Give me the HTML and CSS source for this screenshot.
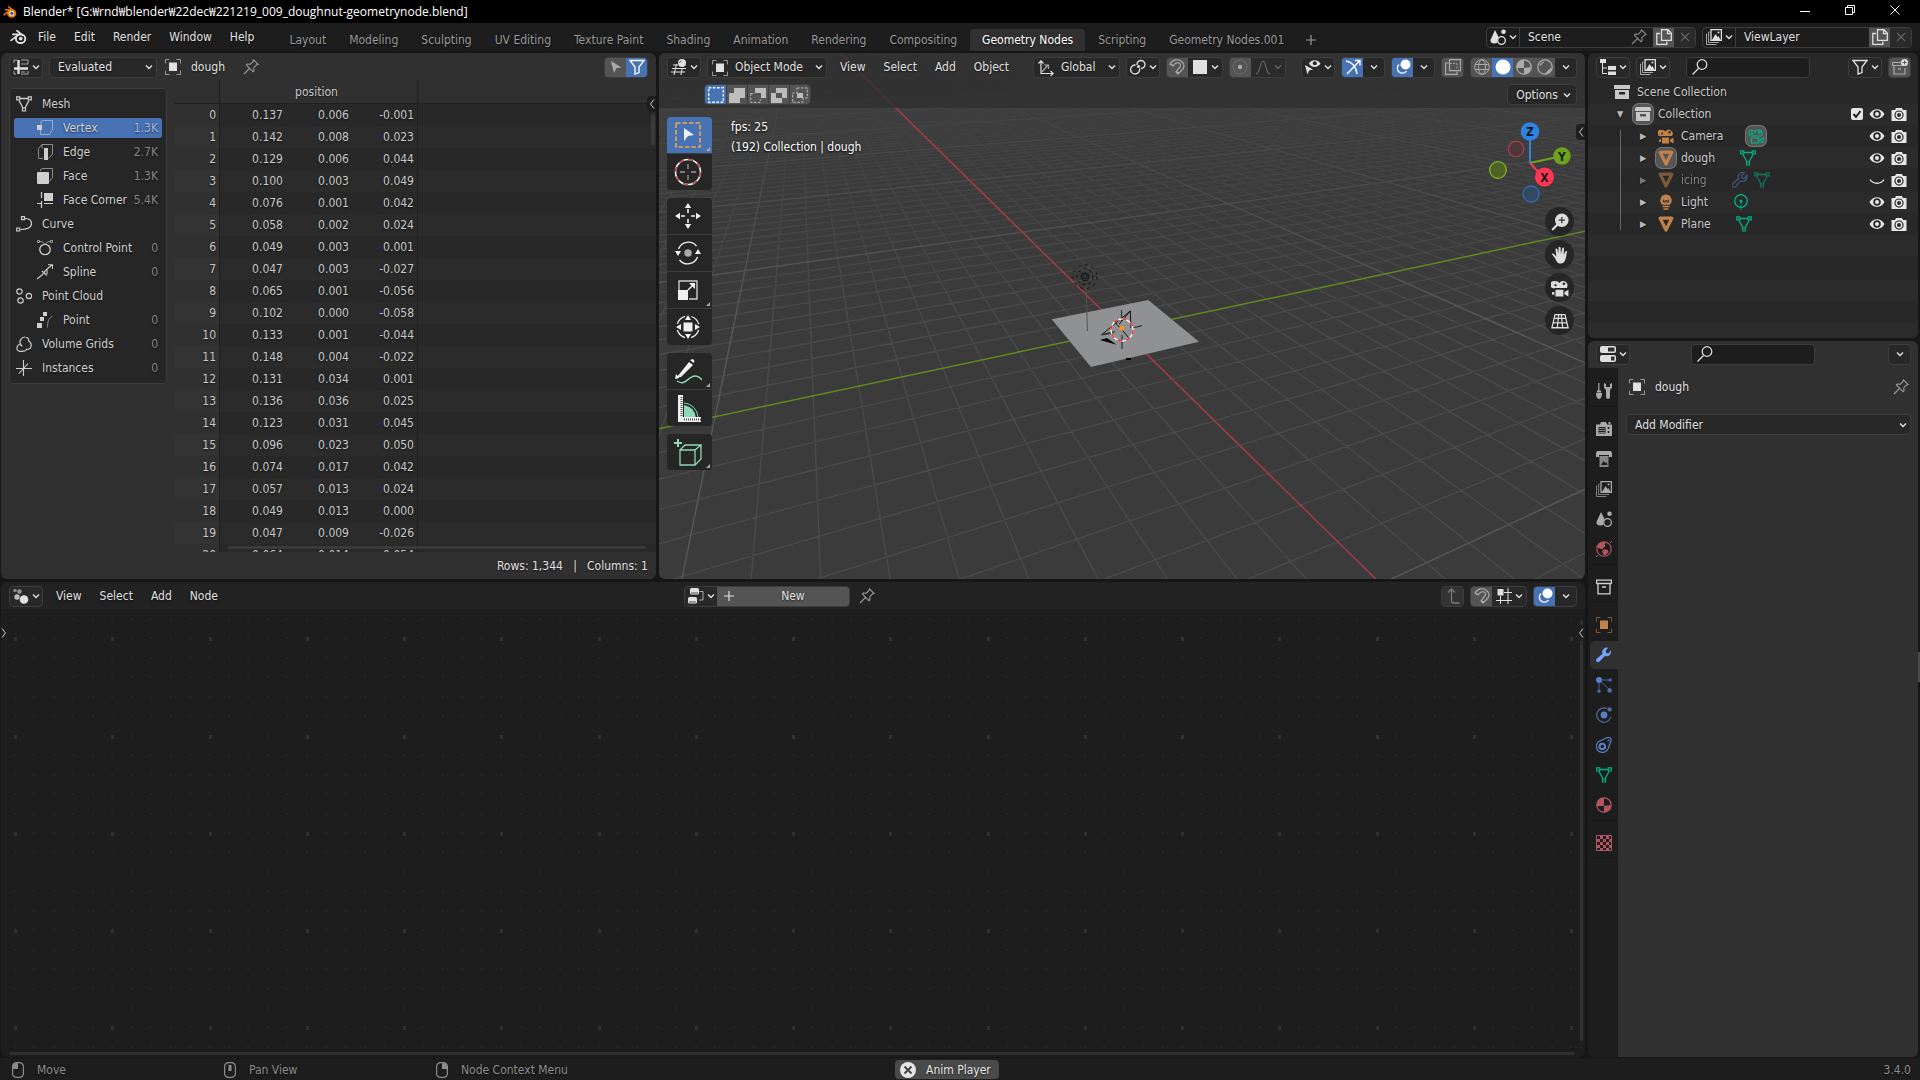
FILE: index.html
```html
<!DOCTYPE html>
<html lang="en">
<head>
<meta charset="utf-8">
<title>Blender* [G:₩rnd₩blender₩22dec₩221219_009_doughnut-geometrynode.blend]</title>
<link rel="stylesheet" href="styles.css">
</head>
<body>

<!-- icon sprite -->
<svg class="sprite" aria-hidden="true">
  <symbol id="i-chev" viewBox="0 0 10 10"><path d="M2 3.5l3 3 3-3" fill="none" stroke="currentColor" stroke-width="1.4"/></symbol>
  <symbol id="i-logo" viewBox="0 0 18 16"><g fill="none" stroke="currentColor" stroke-linecap="round"><path d="M1.2 11.6L9.8 4.9M3 5.2h8M7.4 1.4l6.2 4.9" stroke-width="1.8"/><ellipse cx="11.2" cy="9.8" rx="5" ry="4.6" stroke-width="2"/></g><circle cx="11.4" cy="9.7" r="2" fill="currentColor"/></symbol>
  <symbol id="i-sheet" viewBox="0 0 16 16"><path d="M5.5 1v14M1 9.5h14" stroke="currentColor" stroke-width="2.4"/><path d="M1 4V1h3M8 1h7v4M15 12v3H8M1 12v3h2M8 5h7M8 13h4" fill="none" stroke="currentColor" opacity=".65"/></symbol>
  <symbol id="i-view3d" viewBox="0 0 16 16"><path d="M1 9.5h14M0 13h14M5.5 5L3 16M11 10l-1 6M2 6h5" fill="none" stroke="currentColor" stroke-width="1.1"/><circle cx="11" cy="4" r="4" fill="currentColor"/><path d="M8.5 4a2.5 2.5 0 0 1 2-2" stroke="#555" fill="none"/></symbol>
  <symbol id="i-object" viewBox="0 0 16 16"><rect x="4" y="3.5" width="8" height="8.5" fill="currentColor"/><path d="M.5 4.5V.5h4M11.5.5h4v4M15.5 11.5v4h-4M4.500 15.500h-4v-4" fill="none" stroke="currentColor" opacity=".6"/></symbol>
  <symbol id="i-pin" viewBox="0 0 16 16"><path d="M10.5.8l4.700 4.700-1.800.6-2.600 2.600.2 3-1 1-6.700-6.700 1-1 3 .2 2.600-2.600zM6.500 9.500L1 15" fill="none" stroke="currentColor" stroke-width="1.1"/></symbol>
  <symbol id="i-arrow" viewBox="0 0 16 16"><path d="M3 2l10.500 6.500-5 .5-2.500 5z" fill="currentColor"/></symbol>
  <symbol id="i-funnel" viewBox="0 0 16 16"><path d="M1 1.5h14L10 8v5.500l-4 1.500V8z" fill="none" stroke="currentColor" stroke-width="1.3"/></symbol>
  <symbol id="i-mesh" viewBox="0 0 16 16"><g fill="none" stroke="currentColor"><path d="M4 2.500h8M3 4.500l4 7.500M13 4.500L9 12" stroke-width="1.300"/><path d="M.7.800h3v3h-3zM12.300.800h3v3h-3zM6.500 12h3v3h-3z" stroke-width="1.200"/></g></symbol>
  <symbol id="i-vertex" viewBox="0 0 16 16"><path d="M4 5V1.500L6 .500h9.500v9l-3 5H3.500V10" fill="none" stroke="currentColor" opacity=".6"/><rect y="5" width="5" height="5" fill="currentColor"/></symbol>
  <symbol id="i-edge" viewBox="0 0 16 16"><path d="M6 14.500H1.500v-10L5 .500h10.500v9.500l-4 4.500M5 .500v4" fill="none" stroke="currentColor" opacity=".6"/><rect x="7" y="4" width="4" height="12" fill="currentColor"/></symbol>
  <symbol id="i-face" viewBox="0 0 16 16"><path d="M3.500 3V1.500l2-1h10v9l-3 4" fill="none" stroke="currentColor" opacity=".6"/><rect y="4" width="12" height="12" rx="1" fill="currentColor"/></symbol>
  <symbol id="i-corner" viewBox="0 0 16 16"><path d="M7 1h9v8H7z" fill="currentColor"/><path d="M4.500 0v6M4.500 9v7M0 11.500h5M7 11.500h9" stroke="currentColor" stroke-width="1.200"/></symbol>
  <symbol id="i-curve" viewBox="0 0 16 16"><g fill="none" stroke="currentColor" stroke-width="1.200"><path d="M8.500 2.500c5 0 7 2.500 7 5s-2 6-11 6"/><path d="M5.500.600h3v3h-3zM.700 12h3v3h-3z"/></g></symbol>
  <symbol id="i-cpoint" viewBox="0 0 16 16"><g fill="none" stroke="currentColor"><circle cx="8" cy="9.500" r="5.200" stroke-width="1.300"/><path d="M.500.500h2v2h-2zM13.500.500h2v2h-2zM2.500 1.500c3 0 4 1 5.500 3 1.500-2 2.500-3 5.500-3" opacity=".65"/></g></symbol>
  <symbol id="i-spline" viewBox="0 0 16 16"><path d="M0 15l5-4 4-5 6-5M11 .700h4.500V5M5 7l5 4.500M10 5v5" fill="none" stroke="currentColor" stroke-width="1.100"/></symbol>
  <symbol id="i-pcloud" viewBox="0 0 16 16"><g fill="none" stroke="currentColor" stroke-width="1.200"><circle cx="3.500" cy="3.500" r="2.700"/><circle cx="13" cy="8" r="2.700"/><circle cx="4.500" cy="12.500" r="2.700"/></g></symbol>
  <symbol id="i-point" viewBox="0 0 16 16"><path d="M6 0h4v4H6zM3 5h4v4H3zM0 11h5v5H0z" fill="currentColor"/><path d="M15.500 4c-4 2-5 6-5 11.500" fill="none" stroke="currentColor" opacity=".55"/></symbol>
  <symbol id="i-volume" viewBox="0 0 16 16"><path d="M4.500 8C2.500 5 6 .800 9 1c3.500 0 4 3 3.500 4 2.500 1 3 4 2.500 5.500-.500 3-3 3-4 2.500-1 .500-1.500 2.500-4 2.200C3 16 .500 14.500 1 12c0-2 1.500-3.500 3.500-4zm0 0c0 1.500 1 2 2 2" fill="none" stroke="currentColor" stroke-width="1.200"/></symbol>
  <symbol id="i-inst" viewBox="0 0 16 16"><path d="M7.500 0v16M0 8.500h16M3 13.500l9-10" stroke="currentColor" stroke-width="1.100"/></symbol>
  <symbol id="i-orient" viewBox="0 0 16 16"><g fill="none" stroke="currentColor" stroke-width="1.200"><path d="M3 14V1M.500 3.500L3 .800l2.500 2.700M3 13.500h12M12.500 11l2.700 2.500-2.700 2.500"/><path d="M4 12l6-7M6 5h4.500v4" opacity=".7"/></g></symbol>
  <symbol id="i-pivot" viewBox="0 0 16 16"><g fill="none" stroke="currentColor" stroke-width="1.300"><path d="M7 6a4 4 0 1 1 4 3.500M9.500 9.500a4.500 4.500 0 1 1-4-3.500"/></g><circle cx="8.500" cy="7.500" r="1.500" fill="currentColor"/></symbol>
  <symbol id="i-magnet" viewBox="0 0 16 16"><path d="M1 5c3-5 8-5 11-3 4 3 4 7 0 10l-3 3-2-2 3-4c2-2 2-4 0-5s-4 0-6 3zM7 12.500l3 2M1.500 5l3 2" fill="none" stroke="currentColor" stroke-width="1.200"/></symbol>
  <symbol id="i-square" viewBox="0 0 16 16"><rect x="1" y="1" width="14" height="14" fill="currentColor"/></symbol>
  <symbol id="i-prop" viewBox="0 0 16 16"><circle cx="8" cy="8" r="2.200" fill="currentColor"/><circle cx="8" cy="8" r="7" fill="none" stroke="currentColor" opacity=".3"/></symbol>
  <symbol id="i-falloff" viewBox="0 0 16 16"><path d="M1 15c4 0 4-13 7-13s3 13 7 13" fill="none" stroke="currentColor" stroke-width="1.200"/></symbol>
  <symbol id="i-vis" viewBox="0 0 16 16"><path d="M4 4.500C6 0 13 0 15.500 4.500 13 9 6 9 4 4.500z" fill="currentColor"/><circle cx="9.800" cy="4.300" r="2" fill="#282828"/><path d="M0 6l8 4.500-4 1L2.500 15.500z" fill="currentColor"/></symbol>
  <symbol id="i-gizmo" viewBox="0 0 16 16"><path d="M1 2c6 1 10 6 11 13M2 15L14.500 2M10 1.500h5v5" fill="none" stroke="currentColor" stroke-width="1.400"/></symbol>
  <symbol id="i-overlay" viewBox="0 0 16 16"><circle cx="10.500" cy="5.500" r="5" fill="currentColor"/><path d="M4 5.500A5 5 0 1 0 11.500 12" fill="none" stroke="currentColor" stroke-width="1.300"/><path d="M6 8a3 3 0 0 0 3 3" stroke="#4772b3" fill="none" stroke-width="1.300"/></symbol>
  <symbol id="i-xray" viewBox="0 0 16 16"><path d="M4.500.600h11v11h-11z" fill="none" stroke="currentColor" stroke-width="1.200"/><path d="M3.500 4H.600v11.400H12V12.500" fill="none" stroke="currentColor" stroke-width="1.200"/><path d="M4.500 4.500h7.500v7" fill="none" stroke="currentColor" stroke-dasharray="2 1.500"/></symbol>
  <symbol id="i-wire" viewBox="0 0 16 16"><g fill="none" stroke="currentColor"><circle cx="8" cy="8" r="7.300"/><ellipse cx="8" cy="8" rx="3.500" ry="7.300"/><path d="M1 5.500h14M1 10.500h14"/></g></symbol>
  <symbol id="i-solid" viewBox="0 0 16 16"><circle cx="8" cy="8" r="7.500" fill="currentColor"/></symbol>
  <symbol id="i-mat" viewBox="0 0 16 16"><circle cx="8" cy="8" r="7.200" fill="none" stroke="currentColor" stroke-width="1.300"/><path d="M8 .800V9H.800A7.200 7.200 0 0 1 8 .800zM8 9l7-1a7.200 7.200 0 0 1-7 7.200z" fill="currentColor"/></symbol>
  <symbol id="i-rend" viewBox="0 0 16 16"><circle cx="8" cy="8" r="7.200" fill="none" stroke="currentColor" stroke-width="1.300"/><path d="M3 7a5 5 0 0 1 4-4M14 9a7 7 0 0 1-6 6l5-5z" fill="currentColor" stroke="currentColor"/></symbol>
  <symbol id="i-sel1" viewBox="0 0 16 16"><path d="M.700.700h14.600v14.600H.700z" fill="none" stroke="currentColor" stroke-width="1.400" stroke-dasharray="2.500 1.700"/></symbol>
  <symbol id="i-sel2" viewBox="0 0 16 16"><path d="M5 1h11v10h-5v5H0V6h5z" fill="currentColor"/></symbol>
  <symbol id="i-sel3" viewBox="0 0 16 16"><path d="M5 1h11v10h-5V6H5z" fill="currentColor"/><path d="M.700 6.500v8.800h9.600v-3M.700 6.500H5" fill="none" stroke="currentColor" stroke-dasharray="2.500 1.500"/></symbol>
  <symbol id="i-sel4" viewBox="0 0 16 16"><path fill-rule="evenodd" d="M5 1h11v10h-5v5H0V6h5zM5 6v5h6V6z" fill="currentColor"/></symbol>
  <symbol id="i-sel5" viewBox="0 0 16 16"><path d="M5 6h6v5H5z" fill="currentColor"/><path d="M5 1h10.300v10H11v4.300H.700V6H5z" fill="none" stroke="currentColor" stroke-dasharray="2.500 1.500"/></symbol>
  <symbol id="i-scene" viewBox="0 0 16 16"><path d="M5 1l4 8c-2 1-2.500 4-1.500 5C3 15 0 14 .500 11z" fill="currentColor"/><circle cx="13.500" cy="2.800" r="2.300" fill="currentColor"/><circle cx="11.500" cy="11.500" r="3.800" fill="none" stroke="currentColor" stroke-width="1.300"/></symbol>
  <symbol id="i-layers" viewBox="0 0 16 16"><path d="M5 .600h10.400v10.800H5z" fill="none" stroke="currentColor" stroke-width="1.300"/><path d="M6 11l3.500-6 2 3 1-1 2 4z" fill="currentColor"/><path d="M3.500 3H2.600v10.500H13M1.200 5H.500v10.500H10.500" fill="none" stroke="currentColor" opacity=".7"/><circle cx="12.500" cy="3.500" r="1" fill="currentColor"/></symbol>
  <symbol id="i-copy" viewBox="0 0 16 16"><path d="M5.500.700H12l3.300 3.500v7.100H5.500zM11.500.700v4h4M4 4.500H.800v10.800h10V12.500" fill="none" stroke="currentColor" stroke-width="1.300"/></symbol>
  <symbol id="i-x" viewBox="0 0 16 16"><path d="M4 4l8 8M12 4l-8 8" stroke="currentColor" stroke-width="1.100"/></symbol>
  <symbol id="i-plus" viewBox="0 0 16 16"><path d="M8 3v10M3 8h10" stroke="currentColor" stroke-width="1.200"/></symbol>
  <symbol id="i-tree" viewBox="0 0 16 16"><path d="M0 0h6v4H0zM8 7h8v4H8zM8 12.500h8V16H8z" fill="currentColor"/><path d="M2.500 4v10.500H7M2.500 9H7" fill="none" stroke="currentColor"/></symbol>
  <symbol id="i-search" viewBox="0 0 16 16"><circle cx="10" cy="5.500" r="4.800" fill="none" stroke="currentColor" stroke-width="1.200"/><path d="M6.500 9.500L.500 15.500" stroke="currentColor" stroke-width="1.300"/></symbol>
  <symbol id="i-newcoll" viewBox="0 0 16 16"><path d="M.600 3.500H9M.600 3.500v3h13v-1M2 7v8h11V9" fill="none" stroke="currentColor" stroke-width="1.200"/><path d="M6 10h3" stroke="currentColor" stroke-width="1.600"/><circle cx="12.500" cy="3.500" r="3.500" fill="#e0e0e0"/><path d="M12.500 1.500v4M10.500 3.500h4" stroke="#545454"/></symbol>
  <symbol id="i-coll" viewBox="0 0 16 16"><path d="M0 1h16v4H0z" fill="currentColor"/><path fill-rule="evenodd" d="M1 6h14v9H1zM5 8v2.500h6V8z" fill="currentColor"/></symbol>
  <symbol id="i-collo" viewBox="0 0 16 16"><path d="M.600 1.100h14.800v3.400H.600zM2 5v9.900h12V5M6 8h4" fill="none" stroke="currentColor" stroke-width="1.300"/></symbol>
  <symbol id="i-cam" viewBox="0 0 16 16"><path fill-rule="evenodd" d="M4 2a3.300 3.300 0 0 1 3.500 1.500A3.900 3.900 0 1 1 14 8H4a3.300 3.300 0 1 1 0-6zM4 4.500a1 1 0 1 0 0 2 1 1 0 0 0 0-2zM11.500 3a1.200 1.200 0 1 0 0 2.400 1.200 1.200 0 0 0 0-2.400z" fill="currentColor"/><path d="M4 9.500h7v6H4zM15.500 9.500v6l-3.500-2v-2zM1 11.500h2v2.500H1z" fill="currentColor"/></symbol>
  <symbol id="i-camo" viewBox="0 0 16 16"><g fill="none" stroke="currentColor" stroke-width="1.200"><path d="M4 2.500a3 3 0 0 1 3.500 1.500A3.500 3.500 0 1 1 13 8H4a2.800 2.800 0 1 1 0-5.500zM3.500 10h7v5h-7zM15.300 10v5L12 13v-1z"/><circle cx="4" cy="5.500" r=".6"/><circle cx="11.500" cy="4.500" r=".8"/></g></symbol>
  <symbol id="i-eye" viewBox="0 0 16 16"><path fill-rule="evenodd" d="M.500 8C4 1.500 12 1.500 15.500 8 12 14.500 4 14.500.500 8zM8 4.200a3.800 3.800 0 1 0 0 7.600 3.800 3.800 0 0 0 0-7.600z" fill="currentColor"/><circle cx="8" cy="8" r="2" fill="currentColor"/></symbol>
  <symbol id="i-eyec" viewBox="0 0 16 16"><path d="M1 7.500c3 5 11 5 14 0" fill="none" stroke="currentColor" stroke-width="1.300"/></symbol>
  <symbol id="i-shot" viewBox="0 0 16 16"><path fill-rule="evenodd" d="M1 4h3l1-2h6l1 2h3.500v11H.500V4zM8 4.500a4.600 4.600 0 1 0 0 9.200 4.600 4.600 0 0 0 0-9.200z" fill="currentColor"/><circle cx="8" cy="9" r="2.700" fill="none" stroke="currentColor" stroke-width="1.400"/></symbol>
  <symbol id="i-meshob" viewBox="0 0 16 16"><path d="M2.200 2.200h11.600L8 14z" fill="none" stroke="currentColor" stroke-width="3.200" stroke-linejoin="round"/></symbol>
  <symbol id="i-bulb" viewBox="0 0 16 16"><path d="M8 .500a5.800 5.800 0 0 1 3.500 10.300H4.500A5.800 5.800 0 0 1 8 .500zM4.500 11.800h7v1.400h-7zM5.500 14.200h5v1.500h-5z" fill="currentColor"/><path d="M5.500 5.500V8h1.800V6.500h1.500V8h1.700V5.500" fill="none" stroke="#282828"/></symbol>
  <symbol id="i-lamp" viewBox="0 0 16 16"><circle cx="8" cy="7" r="6.300" fill="none" stroke="currentColor" stroke-width="1.300"/><circle cx="8" cy="7" r="1.500" fill="currentColor"/><path d="M8 8v8" stroke="currentColor" stroke-dasharray="2 1.200"/></symbol>
  <symbol id="i-wrench" viewBox="0 0 16 16"><path d="M14.800 3.200a4.600 4.600 0 0 1-6 5.800l-5.500 5.800a2 2 0 0 1-2.800-2.800L6.500 6.800a4.600 4.600 0 0 1 5.800-6L9.700 3.600l.5 2.400 2.300.4z" fill="currentColor"/></symbol>
  <symbol id="i-wrencho" viewBox="0 0 16 16"><path d="M14.800 3.200a4.600 4.600 0 0 1-6 5.800l-5.500 5.800a2 2 0 0 1-2.800-2.800L6.500 6.800a4.600 4.600 0 0 1 5.800-6L9.700 3.600l.5 2.400 2.300.4z" fill="none" stroke="currentColor" stroke-width="1.200"/></symbol>
  <symbol id="i-props" viewBox="0 0 16 16"><rect y="0" width="16" height="7" rx="2" fill="currentColor"/><rect y="9" width="16" height="7" rx="2" fill="currentColor"/><path d="M8 1.500h6.500v4H8zM11 10.500h3.500v4H11z" fill="#303030"/></symbol>
  <symbol id="i-tools" viewBox="0 0 16 16"><path d="M2.800 0v8" stroke="currentColor" stroke-width="1.200"/><path d="M0 10h6c0 3-1 6-3 6s-3-3-3-6zM1 7.500h4v2H1zM8 0v4c0 2 2 2.500 2 3v7c0 2.500 4 2.500 4 0V7c0-.5 2-1 2-3V0l-2 1v3h-4V1z" fill="currentColor"/></symbol>
  <symbol id="i-render" viewBox="0 0 16 16"><path d="M0 3.500h4L5 1h5l1 2.500h5V15H0zM12.500 1h2v2h-2z" fill="currentColor"/><path d="M2.500 6h7v6.500h-7z" fill="#1d1d1d"/><path d="M3 7.500h6M3 9.500h6M3 11.500h6" stroke="currentColor" stroke-width=".7"/><path d="M12.500 6v2M12.500 10v2" stroke="#1d1d1d" stroke-width="1.600"/></symbol>
  <symbol id="i-output" viewBox="0 0 16 16"><path d="M1 0h14l1 2v4h-3V4H3v2H0V2z" fill="currentColor"/><path d="M3.500 5h9v11h-9z" fill="currentColor" opacity=".75"/><path d="M5 14l2.500-4 2 2 1-1 1 3z" fill="#1d1d1d"/></symbol>
  <symbol id="i-world" viewBox="0 0 16 16"><circle cx="8" cy="8" r="7.200" fill="none" stroke="currentColor" stroke-width="1.200"/><path d="M3 3c3-2 5-2 6-1l-1 2 1 1-3 3-2-1-3-1zM7 9l4 0 1 2-3 3-2-2zM0 16l2-2M14 2l2-2" fill="currentColor" stroke="currentColor"/></symbol>
  <symbol id="i-part" viewBox="0 0 16 16"><path d="M3 3h11M3 3v11M3 3l11 10" stroke="currentColor" opacity=".7"/><g fill="currentColor"><circle cx="3" cy="3" r="3"/><circle cx="14.200" cy="3" r="1.800" opacity=".7"/><circle cx="3" cy="14.200" r="1.800" opacity=".7"/><circle cx="13.700" cy="13.500" r="2.300" opacity=".8"/></g></symbol>
  <symbol id="i-phys" viewBox="0 0 16 16"><path d="M11 1.500a7.200 7.200 0 1 0 4 8" fill="none" stroke="currentColor" stroke-width="1.200" opacity=".8"/><circle cx="8" cy="8" r="3.400" fill="currentColor"/><circle cx="13.700" cy="2.400" r="2.200" fill="currentColor" opacity=".8"/></symbol>
  <symbol id="i-constr" viewBox="0 0 16 16"><path d="M2 5l8-4c3-1.500 6 0 5 3l-3 8c-1 2-3 3.500-6 3.300C.500 15-1 9 2 5z" fill="none" stroke="currentColor" stroke-width="1.200"/><circle cx="6.300" cy="9.500" r="2.800" fill="none" stroke="currentColor" stroke-width="2"/><circle cx="12.500" cy="3.500" r="1" fill="currentColor"/></symbol>
  <symbol id="i-tex" viewBox="0 0 16 16"><path d="M.500.500h15v15H.500z" fill="none" stroke="currentColor"/><path d="M4 1h3v3H4zM10 1h3v3h-3zM1 4h3v3H1zM7 4h3v3H7zM13 4h2v3h-2zM4 7h3v3H4zM10 7h3v3h-3zM1 10h3v3H1zM7 10h3v3H7zM13 10h2v3h-2zM4 13h3v2H4zM10 13h3v2h-3z" fill="currentColor"/></symbol>
  <symbol id="i-geo" viewBox="0 0 16 16"><circle cx="2" cy="2.500" r="1.800" fill="currentColor" opacity=".5"/><circle cx="6.500" cy="3.500" r="2.200" fill="currentColor" opacity=".6"/><circle cx="4" cy="9" r="2.700" fill="currentColor" opacity=".8"/><circle cx="11" cy="11.500" r="4.300" fill="currentColor"/></symbol>
  <symbol id="i-ntree" viewBox="0 0 16 16"><rect x="2" width="9" height="6.500" rx="1.500" fill="currentColor"/><rect y="9" width="9" height="6.500" rx="1.500" fill="currentColor"/><path d="M3 5h7M1 14h7" stroke="#555"/><path d="M11.500 3.500h3.500v8.500h-4" fill="none" stroke="currentColor" opacity=".7"/></symbol>
  <symbol id="i-up" viewBox="0 0 16 16"><path d="M3 4.500L6.500 1 10 4.500M6.500 1v12c0 1.500 1 2 2 2h6" fill="none" stroke="currentColor" stroke-width="1.300"/></symbol>
  <symbol id="i-snapgrid" viewBox="0 0 16 16"><path d="M4.500 8v8M12 0v16M0 12.500h16M8 4.500h8" stroke="currentColor"/><rect x="1.500" y="1" width="6" height="6.500" fill="currentColor"/></symbol>
  <symbol id="i-mouse1" viewBox="0 0 12 16"><rect x=".6" y=".6" width="10.800" height="14.800" rx="4" fill="none" stroke="currentColor" stroke-width="1.200"/><path d="M1 7V4q0-3 5-3v6z" fill="currentColor"/></symbol>
  <symbol id="i-mouse2" viewBox="0 0 12 16"><rect x=".6" y=".6" width="10.800" height="14.800" rx="4" fill="none" stroke="currentColor" stroke-width="1.200"/><path d="M4.500 3h3v6h-3z" fill="currentColor"/></symbol>
  <symbol id="i-mouse3" viewBox="0 0 12 16"><rect x=".6" y=".6" width="10.800" height="14.800" rx="4" fill="none" stroke="currentColor" stroke-width="1.200"/><path d="M11 7V4q0-3-5-3v6z" fill="currentColor"/></symbol>
  <!-- toolbar, 28px -->
  <symbol id="t-select" viewBox="0 0 28 28"><path d="M2 2h24v24H2z" fill="none" stroke="#f5a83c" stroke-width="1.600" stroke-dasharray="4.500 2"/><path d="M10 7l10 7-6 1-4 5z" fill="#f0f0f0"/></symbol>
  <symbol id="t-cursor" viewBox="0 0 28 28"><circle cx="14" cy="14" r="12.500" fill="none" stroke="#f0f0f0" stroke-width="1.600"/><circle cx="14" cy="14" r="12.500" fill="none" stroke="#b8494f" stroke-width="1.600" stroke-dasharray="5 4.800"/><path d="M14 6v5M14 17v5M6 14h5M17 14h5" stroke="#999" stroke-width="1.300"/></symbol>
  <symbol id="t-move" viewBox="0 0 28 28"><path d="M14 1l3.200 5h-6.400zM14 27l3.200-5h-6.400zM1 14l5-3.200v6.400zM27 14l-5-3.200v6.400z" fill="#f0f0f0"/><path d="M14 7v4M14 17v4M7 14h4M17 14h4" stroke="#f0f0f0" stroke-width="1.600"/></symbol>
  <symbol id="t-rotate" viewBox="0 0 28 28"><path d="M4.500 10a10.500 10.500 0 0 1 18-3M23.500 18a10.500 10.500 0 0 1-18 3" fill="none" stroke="#f0f0f0" stroke-width="1.300"/><path d="M4 17l-3-5h6zM24 10l-3 5h6z" fill="#f0f0f0"/><circle cx="14" cy="14" r="3.700" fill="#aaa"/></symbol>
  <symbol id="t-scale" viewBox="0 0 28 28"><path d="M5 14V5h18v18h-8" fill="none" stroke="#ccc" stroke-width="1.400"/><path d="M4 14h10v10H4zM21 7v6l-6-6z" fill="#f0f0f0"/><path d="M14 14l5-5" stroke="#f0f0f0" stroke-width="1.400"/></symbol>
  <symbol id="t-trans" viewBox="0 0 28 28"><circle cx="14" cy="14" r="11" fill="none" stroke="#f0f0f0" stroke-width="1.300" stroke-dasharray="11 6.280" stroke-dashoffset="-3"/><path d="M9.500 9.500h9v9h-9zM14 2l3 5h-6zM14 26l3-5h-6zM2 14l5-3v6zM26 14l-5-3v6z" fill="#f0f0f0"/></symbol>
  <symbol id="t-anno" viewBox="0 0 28 28"><path d="M3 20l12-15 4 3-12 12zM2 17l3.500 4L1 22zM16 3l3-1 1.500 2-1 2z" fill="#f0f0f0"/><path d="M3 24c6 4 9 0 13-3s8-3 12 2" fill="none" stroke="#8fd9b6" stroke-width="1.500"/></symbol>
  <symbol id="t-measure" viewBox="0 0 28 28"><path d="M10 11a14 14 0 0 1 12 13H10z" fill="#8fd9b6"/><path d="M10 9a15 15 0 0 1 14 14" fill="none" stroke="#8fd9b6"/><path d="M4 1h5v22h18v5H4z" fill="#f0f0f0"/><path d="M7.500 3v20M10 25.500h17" stroke="#555" stroke-width="2" stroke-dasharray="1 1"/></symbol>
  <symbol id="t-cube" viewBox="0 0 28 28"><path d="M6 12h15v15H6zM6 12l5-5h16l-6 5M27 7v14l-6 6" fill="none" stroke="#8fd9b6" stroke-width="1.300"/><path d="M4 1v8M0 5h8" stroke="#8fd9b6" stroke-width="2"/></symbol>
  <!-- view navigation, 20px -->
  <symbol id="n-zoom" viewBox="0 0 20 20"><circle cx="12" cy="8" r="7.500" fill="currentColor"/><path d="M7 13l-5 5" stroke="currentColor" stroke-width="2.500" stroke-linecap="round"/><path d="M12 4.500v7M8.500 8h7" stroke="#333" stroke-width="1.400"/></symbol>
  <symbol id="n-hand" viewBox="0 0 20 20"><path d="M1 9c1-1 2-.5 3 .5L6 12 5 4c0-1.500 2-1.500 2.200 0L8 9l.5-7c.2-1.500 2-1.500 2.200 0L11 9l1.500-6.500c.5-1.300 2-1 2 .3L14 10l2-4c.7-1 2-.5 1.800.7C17 10 17 12 16 15c-1 3-2.500 4.500-5 4.500-4 0-5-3-6.500-6z" fill="currentColor"/></symbol>
  <symbol id="n-grid" viewBox="0 0 20 20"><path d="M4.500 3h11L19 17.500H1zM3.500 7h13M2.500 12h15M8.500 3L7 17.500M11.500 3L13 17.500" fill="none" stroke="currentColor" stroke-width="1.400"/></symbol>
</svg>

<div class="titlebar">
  <svg class="logo-c" viewBox="0 0 18 16"><g fill="none" stroke="#ea7600" stroke-linecap="round"><path d="M1.200 11.600L9.800 4.900M3 5.200h8M7.400 1.400l6.200 4.900" stroke-width="2"/><ellipse cx="11.200" cy="9.800" rx="4.600" ry="4.300" stroke-width="2.600" fill="#fff"/></g><circle cx="11.400" cy="9.700" r="2" fill="#265787"/></svg>
  <span class="title">Blender* [G:₩rnd₩blender₩22dec₩221219_009_doughnut-geometrynode.blend]</span>
  <div class="winbtns">
    <button aria-label="Minimize"><svg viewBox="0 0 12 12"><path d="M1 7.500h10" stroke="#fff"/></svg></button>
    <button aria-label="Restore"><svg viewBox="0 0 12 12"><path d="M1.500 3.500h7v7h-7zM3.500 3V1.500h7v7H9" fill="none" stroke="#fff"/></svg></button>
    <button aria-label="Close"><svg viewBox="0 0 12 12"><path d="M1.500 1.500l9 9M10.500 1.500l-9 9" stroke="#fff"/></svg></button>
  </div>
</div>

<div class="topbar">
  <button class="applogo" aria-label="Blender"><svg><use href="#i-logo"/></svg></button>
  <div class="menus">
    <button>File</button><button>Edit</button><button>Render</button><button>Window</button><button>Help</button>
  </div>
  <div class="tabs">
    <button>Layout</button><button>Modeling</button><button>Sculpting</button><button>UV Editing</button><button>Texture Paint</button><button>Shading</button><button>Animation</button><button>Rendering</button><button>Compositing</button><button class="active">Geometry Nodes</button><button>Scripting</button><button>Geometry Nodes.001</button><button class="addtab" aria-label="Add workspace"><svg class="i"><use href="#i-plus"/></svg></button>
  </div>
  <div class="ids">
    <div class="group dark scene">
      <button class="dd" aria-label="Browse scene"><svg class="i"><use href="#i-scene"/></svg><svg class="c"><use href="#i-chev"/></svg></button>
      <input type="text" value="Scene" aria-label="Scene name">
      <button class="dim" aria-label="Pin scene"><svg class="i"><use href="#i-pin"/></svg></button>
      <button class="grey" aria-label="New scene"><svg class="i"><use href="#i-copy"/></svg></button>
      <button class="flat faint" aria-label="Delete scene"><svg class="i"><use href="#i-x"/></svg></button>
    </div>
    <div class="group dark layer">
      <button class="dd" aria-label="Browse view layer"><svg class="i"><use href="#i-layers"/></svg><svg class="c"><use href="#i-chev"/></svg></button>
      <input type="text" value="ViewLayer" aria-label="View layer name">
      <button class="grey" aria-label="New view layer"><svg class="i"><use href="#i-copy"/></svg></button>
      <button class="flat faint" aria-label="Delete view layer"><svg class="i"><use href="#i-x"/></svg></button>
    </div>
  </div>
</div>

<div class="main">
  <div class="left">

    <!-- spreadsheet -->
    <div class="area sheet">
      <div class="header">
        <div class="group"><button class="dd" aria-label="Editor type"><svg class="i"><use href="#i-sheet"/></svg><svg class="c"><use href="#i-chev"/></svg></button></div>
        <select class="sel sel-eval" aria-label="Object evaluation state"><option>Evaluated</option></select>
        <span class="objname"><svg class="i"><use href="#i-object"/></svg>dough</span>
        <button class="plain pin" aria-label="Pin"><svg class="i"><use href="#i-pin"/></svg></button>
        <div class="group push"><button class="grey soft" aria-label="Show only selected"><svg class="i"><use href="#i-arrow"/></svg></button><button class="on" aria-label="Filter"><svg class="i"><use href="#i-funnel"/></svg></button></div>
      </div>
      <div class="sheet-body">
        <div class="dataset">
          <ul>
            <li><svg class="i"><use href="#i-mesh"/></svg><span>Mesh</span></li>
            <li class="sub active"><svg class="i"><use href="#i-vertex"/></svg><span>Vertex</span><em>1.3K</em></li>
            <li class="sub"><svg class="i"><use href="#i-edge"/></svg><span>Edge</span><em>2.7K</em></li>
            <li class="sub"><svg class="i"><use href="#i-face"/></svg><span>Face</span><em>1.3K</em></li>
            <li class="sub"><svg class="i"><use href="#i-corner"/></svg><span>Face Corner</span><em>5.4K</em></li>
            <li><svg class="i"><use href="#i-curve"/></svg><span>Curve</span></li>
            <li class="sub"><svg class="i"><use href="#i-cpoint"/></svg><span>Control Point</span><em>0</em></li>
            <li class="sub"><svg class="i"><use href="#i-spline"/></svg><span>Spline</span><em>0</em></li>
            <li><svg class="i"><use href="#i-pcloud"/></svg><span>Point Cloud</span></li>
            <li class="sub"><svg class="i"><use href="#i-point"/></svg><span>Point</span><em>0</em></li>
            <li><svg class="i"><use href="#i-volume"/></svg><span>Volume Grids</span><em>0</em></li>
            <li><svg class="i"><use href="#i-inst"/></svg><span>Instances</span><em>0</em></li>
          </ul>
        </div>
        <div class="sheet-right">
          <div class="tablewrap">
            <table>
              <thead><tr><th class="ix"></th><th colspan="3" class="pos">position</th><th></th></tr></thead>
              <tbody>
                <tr><th>0</th><td>0.137</td><td>0.006</td><td>-0.001</td><td></td></tr>
                <tr><th>1</th><td>0.142</td><td>0.008</td><td>0.023</td><td></td></tr>
                <tr><th>2</th><td>0.129</td><td>0.006</td><td>0.044</td><td></td></tr>
                <tr><th>3</th><td>0.100</td><td>0.003</td><td>0.049</td><td></td></tr>
                <tr><th>4</th><td>0.076</td><td>0.001</td><td>0.042</td><td></td></tr>
                <tr><th>5</th><td>0.058</td><td>0.002</td><td>0.024</td><td></td></tr>
                <tr><th>6</th><td>0.049</td><td>0.003</td><td>0.001</td><td></td></tr>
                <tr><th>7</th><td>0.047</td><td>0.003</td><td>-0.027</td><td></td></tr>
                <tr><th>8</th><td>0.065</td><td>0.001</td><td>-0.056</td><td></td></tr>
                <tr><th>9</th><td>0.102</td><td>0.000</td><td>-0.058</td><td></td></tr>
                <tr><th>10</th><td>0.133</td><td>0.001</td><td>-0.044</td><td></td></tr>
                <tr><th>11</th><td>0.148</td><td>0.004</td><td>-0.022</td><td></td></tr>
                <tr><th>12</th><td>0.131</td><td>0.034</td><td>0.001</td><td></td></tr>
                <tr><th>13</th><td>0.136</td><td>0.036</td><td>0.025</td><td></td></tr>
                <tr><th>14</th><td>0.123</td><td>0.031</td><td>0.045</td><td></td></tr>
                <tr><th>15</th><td>0.096</td><td>0.023</td><td>0.050</td><td></td></tr>
                <tr><th>16</th><td>0.074</td><td>0.017</td><td>0.042</td><td></td></tr>
                <tr><th>17</th><td>0.057</td><td>0.013</td><td>0.024</td><td></td></tr>
                <tr><th>18</th><td>0.049</td><td>0.013</td><td>0.000</td><td></td></tr>
                <tr><th>19</th><td>0.047</td><td>0.009</td><td>-0.026</td><td></td></tr>
                <tr><th>20</th><td>0.064</td><td>0.014</td><td>-0.054</td><td></td></tr>
              </tbody>
            </table>
            <i class="bar-h"></i><i class="bar-v"></i>
          </div>
          <div class="sheet-foot">Rows: 1,344 &nbsp;&nbsp;|&nbsp;&nbsp; Columns: 1</div>
        </div>
      </div>
      <button class="flap flap-r sheet-flap" aria-label="Show sidebar"><svg viewBox="0 0 6 12"><path d="M5 1.500L1.500 6 5 10.500"/></svg></button>
    </div>

    <!-- 3d viewport -->
    <div class="area view">
      <svg class="scene3d" viewBox="0 0 926 526" preserveAspectRatio="xMidYMid slice">
        <defs>
          <linearGradient id="fade" x1="0" y1="0" x2="0" y2="1"><stop offset="0" stop-color="#fff" stop-opacity=".05"/><stop offset=".12" stop-color="#fff" stop-opacity=".3"/><stop offset=".5" stop-color="#fff"/></linearGradient>
          <mask id="far"><rect width="926" height="526" fill="url(#fade)"/></mask>
        </defs>
        <g fill="none" stroke-width="1.400" mask="url(#far)">
          <path id="minor" stroke="#4a4a4a"/>
          <path id="major" stroke="#585858"/>
        </g>
        <path id="axis-x" stroke="#a53a48" stroke-width="1.500"/>
        <path id="axis-y" stroke="#5f8a20" stroke-width="1.500"/>
        <path d="M392.700 266.300L489.300 247 540 288.700 432 314z" fill="#909193"/>
        <g fill="none" stroke="#111">
          <circle cx="426" cy="223.700" r="2.200"/><circle cx="426" cy="223.700" r="4"/>
          <circle cx="426" cy="223.700" r="8" stroke-dasharray="3 3"/><circle cx="426" cy="223.700" r="12" stroke-dasharray="3 4"/>
          <path d="M427 232l1.500 46" stroke="#555"/>
          <path d="M442.700 281.700L471.300 258l.7 17M471.300 258l-11 13M442.700 281.700l13-3M455 268l15 17"/>
        </g>
        <path d="M441 287l7-2 9.700 6.700z"/><path d="M467 305h5v2h-5z"/>
        <path d="M462.500 257v11M463 282v14M442.700 282l12-2M473 275l10-2.300" stroke="#333" stroke-width="1.200"/>
        <circle cx="463" cy="277" r="11" fill="none" stroke="#eee" stroke-width="1.400"/>
        <circle cx="463" cy="277" r="11" fill="none" stroke="#e5322d" stroke-width="1.400" stroke-dasharray="4.320 4.320"/>
        <circle cx="462.700" cy="275.300" r="2.500" fill="#f79421"/>
      </svg>
      <div class="header over">
        <div class="group"><button class="dd" aria-label="Editor type"><svg class="i"><use href="#i-view3d"/></svg><svg class="c"><use href="#i-chev"/></svg></button></div>
        <div class="selwrap"><svg class="i"><use href="#i-object"/></svg><select class="sel sel-mode" aria-label="Mode"><option>Object Mode</option></select></div>
        <div class="menus"><button>View</button><button>Select</button><button>Add</button><button>Object</button></div>
        <div class="selwrap orient"><svg class="i"><use href="#i-orient"/></svg><select class="sel sel-orient" aria-label="Transform orientation"><option>Global</option></select></div>
        <div class="group"><button class="dd" aria-label="Pivot point"><svg class="i"><use href="#i-pivot"/></svg><svg class="c"><use href="#i-chev"/></svg></button></div>
        <div class="group"><button class="grey soft" aria-label="Snap"><svg class="i"><use href="#i-magnet"/></svg></button><button class="dd" aria-label="Snap to"><svg class="i"><use href="#i-square"/></svg><svg class="c"><use href="#i-chev"/></svg></button></div>
        <div class="group"><button class="grey soft" aria-label="Proportional editing"><svg class="i"><use href="#i-prop"/></svg></button><button class="dd off" aria-label="Falloff"><svg class="i"><use href="#i-falloff"/></svg><svg class="c"><use href="#i-chev"/></svg></button></div>
        <div class="group push"><button class="dd" aria-label="Object types visibility"><svg class="i"><use href="#i-vis"/></svg><svg class="c"><use href="#i-chev"/></svg></button></div>
        <div class="group"><button class="on" aria-label="Gizmos"><svg class="i"><use href="#i-gizmo"/></svg></button><button class="flat" aria-label="Gizmo options"><svg class="c"><use href="#i-chev"/></svg></button></div>
        <div class="group"><button class="on" aria-label="Overlays"><svg class="i"><use href="#i-overlay"/></svg></button><button class="flat" aria-label="Overlay options"><svg class="c"><use href="#i-chev"/></svg></button></div>
        <div class="group"><button class="grey soft" aria-label="X-ray"><svg class="i"><use href="#i-xray"/></svg></button></div>
        <div class="group"><button class="grey soft" aria-label="Wireframe"><svg class="i"><use href="#i-wire"/></svg></button><button class="on" aria-label="Solid"><svg class="i"><use href="#i-solid"/></svg></button><button class="grey soft" aria-label="Material preview"><svg class="i"><use href="#i-mat"/></svg></button><button class="grey soft" aria-label="Rendered"><svg class="i"><use href="#i-rend"/></svg></button><button class="flat" aria-label="Shading options"><svg class="c"><use href="#i-chev"/></svg></button></div>
      </div>
      <div class="toolsettings over">
        <div class="group selmodes"><button class="on" aria-label="Set"><svg class="i"><use href="#i-sel1"/></svg></button><button class="grey" aria-label="Extend"><svg class="i"><use href="#i-sel2"/></svg></button><button class="grey" aria-label="Subtract"><svg class="i"><use href="#i-sel3"/></svg></button><button class="grey" aria-label="Invert"><svg class="i"><use href="#i-sel4"/></svg></button><button class="grey" aria-label="Intersect"><svg class="i"><use href="#i-sel5"/></svg></button></div>
        <div class="group push"><button class="options">Options<svg class="c"><use href="#i-chev"/></svg></button></div>
      </div>
      <div class="view-body">
        <div class="toolbar">
          <div class="tools"><button class="on more" aria-label="Select box"><svg><use href="#t-select"/></svg></button><button aria-label="Cursor"><svg><use href="#t-cursor"/></svg></button></div>
          <div class="tools"><button aria-label="Move"><svg><use href="#t-move"/></svg></button><button aria-label="Rotate"><svg><use href="#t-rotate"/></svg></button><button class="more" aria-label="Scale"><svg><use href="#t-scale"/></svg></button><button aria-label="Transform"><svg><use href="#t-trans"/></svg></button></div>
          <div class="tools"><button class="more" aria-label="Annotate"><svg><use href="#t-anno"/></svg></button><button aria-label="Measure"><svg><use href="#t-measure"/></svg></button></div>
          <div class="tools"><button class="more" aria-label="Add cube"><svg><use href="#t-cube"/></svg></button></div>
        </div>
        <p class="stats">fps: 25<br>(192) Collection | dough</p>
        <div class="nav">
          <svg class="gizmo" viewBox="0 0 90 86">
            <g stroke-width="2"><path d="M48 46V15" stroke="#2f83e3"/><path d="M48 46l32-7" stroke="#6fa21c"/><path d="M48 46l14 15" stroke="#ff3653"/></g>
            <g stroke-width="1.300"><circle cx="34" cy="32" r="7.700" fill="#5a2f38" fill-opacity=".5" stroke="#a63a4a"/><circle cx="16" cy="53" r="8.300" fill="#4f6226" stroke="#7fb51e"/><circle cx="49" cy="77" r="8" fill="#324861" stroke="#2f6cb5"/></g>
            <circle cx="48" cy="14.500" r="9.300" fill="#2f83e3"/><circle cx="80" cy="39" r="8.700" fill="#6fa21c"/><circle cx="62.500" cy="60" r="9.500" fill="#ff3653"/>
            <g class="giz-t"><text x="48" y="19">Z</text><text x="80" y="43.500">Y</text><text x="62.500" y="64.500">X</text></g>
          </svg>
          <button aria-label="Zoom"><svg><use href="#n-zoom"/></svg></button>
          <button aria-label="Pan"><svg><use href="#n-hand"/></svg></button>
          <button aria-label="Camera view"><svg><use href="#i-cam"/></svg></button>
          <button aria-label="Toggle orthographic"><svg><use href="#n-grid"/></svg></button>
        </div>
      </div>
      <button class="flap flap-r view-flap" aria-label="Show sidebar"><svg viewBox="0 0 6 12"><path d="M5 1.500L1.500 6 5 10.500"/></svg></button>
    </div>

    <!-- geometry nodes -->
    <div class="area nodes">
      <div class="header">
        <div class="group"><button class="dd" aria-label="Editor type"><svg class="i"><use href="#i-geo"/></svg><svg class="c"><use href="#i-chev"/></svg></button></div>
        <div class="menus"><button>View</button><button>Select</button><button>Add</button><button>Node</button></div>
        <div class="newtree">
          <div class="group"><button class="dd" aria-label="Browse node tree"><svg class="i"><use href="#i-ntree"/></svg><svg class="c"><use href="#i-chev"/></svg></button><button class="grey new"><svg class="i"><use href="#i-plus"/></svg><span>New</span></button></div>
          <button class="plain" aria-label="Pin"><svg class="i"><use href="#i-pin"/></svg></button>
        </div>
        <div class="group"><button class="grey low" aria-label="Parent node tree"><svg class="i"><use href="#i-up"/></svg></button></div>
        <div class="group"><button class="grey soft" aria-label="Snap"><svg class="i"><use href="#i-magnet"/></svg></button><button class="dd" aria-label="Snap element"><svg class="i"><use href="#i-snapgrid"/></svg><svg class="c"><use href="#i-chev"/></svg></button></div>
        <div class="group"><button class="on" aria-label="Overlays"><svg class="i"><use href="#i-overlay"/></svg></button><button class="flat" aria-label="Overlay options"><svg class="c"><use href="#i-chev"/></svg></button></div>
      </div>
      <div class="canvas" id="canvas">
        <svg class="dots"><path id="dots-s" fill="#242424"/><path id="dots-l" fill="#303030"/></svg>
        <i class="bar-h"></i><i class="bar-v"></i>
        <button class="flap flap-l" aria-label="Show toolbar"><svg viewBox="0 0 6 12"><path d="M1 1.500L4.500 6 1 10.500"/></svg></button>
        <button class="flap flap-r" aria-label="Show sidebar"><svg viewBox="0 0 6 12"><path d="M5 1.500L1.500 6 5 10.500"/></svg></button>
      </div>
    </div>
  </div>

  <div class="right">
    <!-- outliner -->
    <div class="area outliner">
      <div class="header">
        <div class="group"><button class="dd" aria-label="Editor type"><svg class="i"><use href="#i-tree"/></svg><svg class="c"><use href="#i-chev"/></svg></button></div>
        <div class="group"><button class="dd" aria-label="Display mode"><svg class="i"><use href="#i-layers"/></svg><svg class="c"><use href="#i-chev"/></svg></button></div>
        <label class="search"><svg class="i"><use href="#i-search"/></svg><input type="text" aria-label="Filter outliner"></label>
        <div class="group push"><button class="dd" aria-label="Filter"><svg class="i"><use href="#i-funnel"/></svg><svg class="c"><use href="#i-chev"/></svg></button></div>
        <div class="group"><button class="grey soft" aria-label="New collection"><svg class="i"><use href="#i-newcoll"/></svg></button></div>
      </div>
      <ul class="tree">
        <li class="root"><svg class="i"><use href="#i-coll"/></svg><span>Scene Collection</span></li>
        <li class="coll"><b class="tri">▼</b><svg class="i hot"><use href="#i-coll"/></svg><span>Collection</span>
          <div class="flags"><input type="checkbox" checked aria-label="Exclude collection"><svg class="i"><use href="#i-eye"/></svg><svg class="i"><use href="#i-shot"/></svg></div></li>
        <li class="ob"><b class="tri">▶</b><svg class="i or"><use href="#i-cam"/></svg><span>Camera</span><svg class="i gr hot"><use href="#i-camo"/></svg>
          <div class="flags"><svg class="i"><use href="#i-eye"/></svg><svg class="i"><use href="#i-shot"/></svg></div></li>
        <li class="ob"><b class="tri">▶</b><svg class="i or hot"><use href="#i-meshob"/></svg><span>dough</span><svg class="i gr"><use href="#i-mesh"/></svg>
          <div class="flags"><svg class="i"><use href="#i-eye"/></svg><svg class="i"><use href="#i-shot"/></svg></div></li>
        <li class="ob hid"><b class="tri">▶</b><svg class="i or"><use href="#i-meshob"/></svg><span>icing</span><svg class="i bl"><use href="#i-wrencho"/></svg><svg class="i gr"><use href="#i-mesh"/></svg>
          <div class="flags"><svg class="i"><use href="#i-eyec"/></svg><svg class="i"><use href="#i-shot"/></svg></div></li>
        <li class="ob"><b class="tri">▶</b><svg class="i or"><use href="#i-bulb"/></svg><span>Light</span><svg class="i gr"><use href="#i-lamp"/></svg>
          <div class="flags"><svg class="i"><use href="#i-eye"/></svg><svg class="i"><use href="#i-shot"/></svg></div></li>
        <li class="ob"><b class="tri">▶</b><svg class="i or"><use href="#i-meshob"/></svg><span>Plane</span><svg class="i gr"><use href="#i-mesh"/></svg>
          <div class="flags"><svg class="i"><use href="#i-eye"/></svg><svg class="i"><use href="#i-shot"/></svg></div></li>
      </ul>
    </div>

    <!-- properties -->
    <div class="area props">
      <div class="header">
        <div class="group"><button class="dd" aria-label="Editor type"><svg class="i"><use href="#i-props"/></svg><svg class="c"><use href="#i-chev"/></svg></button></div>
        <label class="search"><svg class="i"><use href="#i-search"/></svg><input type="text" aria-label="Search properties"></label>
        <div class="group push"><button class="flat" aria-label="Options"><svg class="c"><use href="#i-chev"/></svg></button></div>
      </div>
      <div class="props-body">
        <div class="ptabs">
          <div><button aria-label="Tool"><svg class="i"><use href="#i-tools"/></svg></button></div>
          <div><button aria-label="Render"><svg class="i"><use href="#i-render"/></svg></button><button aria-label="Output"><svg class="i"><use href="#i-output"/></svg></button><button aria-label="View layer"><svg class="i"><use href="#i-layers"/></svg></button><button aria-label="Scene"><svg class="i"><use href="#i-scene"/></svg></button><button class="rd" aria-label="World"><svg class="i"><use href="#i-world"/></svg></button></div>
          <div><button class="wh" aria-label="Collection"><svg class="i"><use href="#i-collo"/></svg></button></div>
          <div><button class="or" aria-label="Object"><svg class="i"><use href="#i-object"/></svg></button><button class="bl active" aria-label="Modifiers"><svg class="i"><use href="#i-wrench"/></svg></button><button class="bl" aria-label="Particles"><svg class="i"><use href="#i-part"/></svg></button><button class="bl" aria-label="Physics"><svg class="i"><use href="#i-phys"/></svg></button><button class="bl" aria-label="Constraints"><svg class="i"><use href="#i-constr"/></svg></button><button class="gr" aria-label="Data"><svg class="i"><use href="#i-mesh"/></svg></button><button class="rd" aria-label="Material"><svg class="i"><use href="#i-mat"/></svg></button></div>
          <div><button class="rd" aria-label="Texture"><svg class="i"><use href="#i-tex"/></svg></button></div>
        </div>
        <div class="panel">
          <div class="crumb"><svg class="i"><use href="#i-object"/></svg><span>dough</span><button class="plain" aria-label="Pin"><svg class="i"><use href="#i-pin"/></svg></button></div>
          <select class="sel" aria-label="Add Modifier"><option>Add Modifier</option></select>
        </div>
      </div>
    </div>
  </div>
  <i class="edge"></i>
</div>

<div class="status">
  <span><svg><use href="#i-mouse1"/></svg>Move</span>
  <span><svg><use href="#i-mouse2"/></svg>Pan View</span>
  <span><svg><use href="#i-mouse3"/></svg>Node Context Menu</span>
  <button class="player"><svg viewBox="0 0 16 16"><circle cx="8" cy="8" r="8" fill="#e6e6e6"/><path d="M4.500 4.500l7 7M11.500 4.500l-7 7" stroke="#444" stroke-width="2"/></svg>Anim Player</button>
  <span class="ver">3.4.0</span>
</div>

<script src="grid.js"></script>
</body>
</html>
```
FILE: styles.css
```css
*{
	margin:0;
	padding:0;
	box-sizing:border-box;
	}
html,body{
	height:100%;
	}
body{
	display:flex;
	flex-direction:column;
	overflow:hidden;
	background:#161616;
	color:#e0e0e0;
	font:12px/16px "DejaVu Sans Condensed","DejaVu Sans",sans-serif;
	text-shadow:0 1px 2px rgba(0,0,0,.6);
	}
button,input,select{
	font:inherit;
	color:inherit;
	text-shadow:inherit;
	border:0;
	background:none;
	outline:0;
	}
ul{
	list-style:none;
	}
.sprite{
	display:none;
	}
.i{
	width:16px;
	height:16px;
	flex:none;
	}
.c{
	width:10px;
	height:10px;
	flex:none;
	}

/* title bar */
.titlebar{
	height:23px;
	flex:none;
	display:flex;
	align-items:center;
	padding:0 3px;
	background:#000;
	color:#fff;
	font:12px/20px "Open Sans","Noto Sans CJK KR",sans-serif;
	}
.logo-c{
	width:14px;
	height:14px;
	margin-right:6px;
	}
.winbtns{
	display:flex;
	margin-left:auto;
	}
.winbtns button{
	width:45px;
	height:20px;
	}
.winbtns svg{
	width:12px;
	height:12px;
	}

/* top bar */
.topbar{
	height:28px;
	flex:none;
	display:flex;
	background:#1d1d1d;
	padding:0 8px 0 10px;
	}
.applogo svg{
	width:17px;
	height:16px;
	display:block;
	}
.menus{
	display:flex;
	align-items:center;
	}
.menus button{
	padding:0 9px;
	}
.topbar .menus{
	margin-left:2px;
	}
.tabs{
	display:flex;
	align-items:flex-end;
	margin-left:16px;
	color:#989898;
	}
.tabs button{
	height:22px;
	padding:0 10px;
	margin-right:3px;
	border-radius:4px 4px 0 0;
	white-space:nowrap;
	}
.tabs .active{
	padding:0 12px;
	background:#303030;
	color:#fff;
	}
.tabs .addtab{
	padding:3px 6px 0;
	}
.ids{
	display:flex;
	align-items:center;
	gap:6px;
	margin-left:auto;
	}
.scene,.layer{
	width:210px;
	}
.ids .group input{
	flex:1;
	min-width:0;
	padding-left:8px;
	border-left:1px solid #3d3d3d;
	}

/* shared controls */
.group{
	display:flex;
	height:21px;
	flex:none;
	border:1px solid #3d3d3d;
	border-radius:4px;
	background:#282828;
	overflow:hidden;
	}
.group.dark{
	background:#1d1d1d;
	}
.group button{
	display:flex;
	align-items:center;
	justify-content:center;
	min-width:21px;
	}
.group .dd{
	width:32px;
	gap:2px;
	padding-left:2px;
	}
.group button + .dd{
	width:34px;
	}
.group .flat{
	width:21px;
	}
.group .grey{
	background:#545454;
	}
.group .on{
	background:#4772b3;
	color:#fff;
	}
.group .soft{
	color:#aaa;
	}
.group .low{
	background:#333;
	color:#777;
	}
.group .off{
	background:#2b2b2b;
	color:#666;
	}
.group .dim{
	width:28px;
	color:#888;
	}
.group .faint{
	color:#666;
	background:#2a2a2a;
	}
.plain{
	color:#999;
	height:16px;
	}
.push{
	margin-left:auto;
	}
.sel{
	height:21px;
	padding:0 22px 0 8px;
	border:1px solid #3d3d3d;
	border-radius:4px;
	appearance:none;
	background:#282828 url("data:image/svg+xml,%3Csvg xmlns='http://www.w3.org/2000/svg' width='10' height='10'%3E%3Cpath d='M2 3.500l3 3 3-3' fill='none' stroke='%23e0e0e0' stroke-width='1.400'/%3E%3C/svg%3E") no-repeat right 2px center;
	}
.selwrap{
	position:relative;
	display:flex;
	}
.selwrap .i{
	position:absolute;
	left:5px;
	top:3px;
	}
.selwrap .sel{
	padding-left:27px;
	}
.search{
	display:flex;
	align-items:center;
	height:21px;
	padding-left:5px;
	border:1px solid #3d3d3d;
	border-radius:4px;
	background:#1d1d1d;
	}
.search input{
	width:100%;
	min-width:0;
	}

/* areas */
.main{
	flex:1;
	min-height:0;
	display:flex;
	gap:3px;
	padding:2px 2px 1px 1px;
	position:relative;
	}
.left{
	flex:1;
	min-width:0;
	display:grid;
	grid-template-columns:minmax(0,655fr) minmax(0,926fr);
	grid-template-rows:minmax(0,526fr) minmax(0,475fr);
	gap:3px;
	}
.right{
	width:330px;
	display:grid;
	grid-template-rows:minmax(0,285fr) minmax(0,716fr);
	gap:3px;
	}
.area{
	position:relative;
	display:flex;
	flex-direction:column;
	border-radius:6px;
	background:#303030;
	overflow:hidden;
	}
.header{
	height:27px;
	flex:none;
	display:flex;
	align-items:center;
	gap:6px;
	padding:1px 8px 0;
	}
.edge{
	position:absolute;
	right:0;
	top:601px;
	width:2px;
	height:30px;
	background:#4a4a4a;
	}
.flap{
	position:absolute;
	width:9px;
	height:16px;
	background:#1e1e1e;
	}
.flap-r{
	right:0;
	border-radius:4px 0 0 4px;
	}
.flap-l{
	left:0;
	border-radius:0 4px 4px 0;
	}
.flap svg{
	display:block;
	width:6px;
	height:12px;
	margin-left:2px;
	fill:none;
	stroke:#ccc;
	}
.flap-l svg{
	margin-left:0;
	}
.bar-h,.bar-v{
	position:absolute;
	border-radius:2px;
	background:#3a3a3a;
	}

/* spreadsheet */
.sel-eval{
	width:108px;
	}
.objname{
	display:flex;
	gap:10px;
	padding-left:2px;
	}
.pin{
	margin-left:12px;
	}
.sheet-body{
	flex:1;
	min-height:0;
	display:flex;
	gap:8px;
	}
.dataset{
	width:166px;
	flex:none;
	padding:8px 0 0 8px;
	color:#cfcfcf;
	}
.dataset ul{
	padding:3px 4px;
	border:1px solid #3d3d3d;
	border-radius:4px;
	background:#262626;
	}
.dataset li{
	display:flex;
	align-items:center;
	height:20px;
	margin:2px 0;
	padding:0 4px 0 2px;
	border-radius:3px;
	}
.dataset li + li{
	margin-top:4px;
	}
.dataset span{
	margin-left:10px;
	white-space:nowrap;
	}
.dataset .sub{
	padding-left:23px;
	}
.dataset em{
	margin-left:auto;
	font-style:normal;
	color:#858585;
	}
.dataset .active{
	background:#4772b3;
	}
.dataset .active em{
	color:#a3b8d9;
	}
.sheet-right{
	flex:1;
	min-width:0;
	display:flex;
	flex-direction:column;
	}
.tablewrap{
	flex:1;
	min-height:0;
	position:relative;
	overflow:hidden;
	background:#282828;
	color:#c8c8c8;
	}
table{
	width:100%;
	table-layout:fixed;
	border-collapse:separate;
	border-spacing:0;
	}
th{
	font-weight:normal;
	}
thead th{
	height:24px;
	background:#303030;
	border-bottom:1px solid #1f1f1f;
	}
.ix{
	width:45px;
	}
.pos{
	width:198px;
	padding-right:4px;
	}
.ix,.pos,tbody th,td:nth-child(4){
	border-right:1px solid #1f1f1f;
	}
tbody th,td{
	height:22px;
	padding-right:3px;
	text-align:right;
	}
tbody th{
	background:#303030;
	}
tbody tr:nth-child(even){
	background:#2b2b2b;
	}
tbody tr:nth-child(even) th{
	background:#333;
	}
.tablewrap .bar-h{
	left:53px;
	right:10px;
	bottom:3px;
	height:3px;
	}
.tablewrap .bar-v{
	right:1px;
	top:34px;
	width:4px;
	height:31px;
	}
.sheet-foot{
	height:27px;
	flex:none;
	padding:6px 8px 0;
	text-align:right;
	}
.sheet-flap{
	top:43px;
	}

/* 3d viewport */
.view{
	background:#3b3b3b;
	}
.scene3d{
	position:absolute;
	width:100%;
	height:100%;
	}
.over{
	position:relative;
	background:rgba(48,48,48,.8);
	}
.sel-mode{
	width:120px;
	}
.view .menus{
	margin-left:-2px;
	}
.orient{
	margin-left:9px;
	}
.sel-orient{
	width:87px;
	}
.toolsettings{
	height:28px;
	flex:none;
	display:flex;
	align-items:center;
	padding:1px 8px 0 45px;
	}
.selmodes button + button{
	border-left:1px solid #3d3d3d;
	}
.selmodes .grey{
	color:#bdbdbd;
	}
.options{
	gap:4px;
	width:68px;
	padding-left:4px;
	}
.view-body{
	flex:1;
	min-height:0;
	display:flex;
	align-items:flex-start;
	position:relative;
	padding:9px 11px 0 8px;
	}
.tools{
	display:flex;
	flex-direction:column;
	gap:1px;
	margin-bottom:8px;
	border-radius:4px;
	background:#3d3d3d;
	overflow:hidden;
	}
.tools button{
	position:relative;
	display:flex;
	align-items:center;
	justify-content:center;
	width:45px;
	height:36px;
	padding-right:3px;
	background:#262626;
	}
.tools .on{
	background:#4772b3;
	}
.tools svg{
	width:28px;
	height:28px;
	}
.tools .more:after{
	content:"";
	position:absolute;
	right:2px;
	bottom:2px;
	border:2px solid;
	border-color:transparent #aaa #aaa transparent;
	}
.stats{
	margin-left:19px;
	line-height:20px;
	color:#fff;
	text-shadow:0 1px 2px #000;
	}
.nav{
	margin-left:auto;
	width:92px;
	display:flex;
	flex-direction:column;
	align-items:flex-end;
	gap:4px;
	}
.gizmo{
	width:90px;
	height:86px;
	margin-right:2px;
	}
.giz-t{
	font-weight:bold;
	text-anchor:middle;
	text-shadow:none;
	fill:#1a1a1a;
	}
.nav button{
	display:flex;
	align-items:center;
	justify-content:center;
	width:29px;
	height:29px;
	border-radius:50%;
	background:rgba(34,34,34,.85);
	color:#ddd;
	}
.nav button svg{
	width:18px;
	height:18px;
	}
.view-flap{
	top:71px;
	}

/* node editor */
.nodes{
	grid-column:1 / 3;
	background:#1d1d1d;
	}
.nodes .header{
	background:#222;
	}
.nodes .menus{
	flex:21 1 0;
	margin-left:-2px;
	}
.newtree{
	flex:25 1 0;
	display:flex;
	align-items:center;
	gap:9px;
	}
.new{
	width:132px;
	padding-left:4px;
	}
.new span{
	flex:1;
	}
.canvas{
	flex:1;
	position:relative;
	}
.dots{
	position:absolute;
	width:100%;
	height:100%;
	}
.canvas .bar-h,.canvas .bar-v{
	background:#2f2f2f;
	}
.canvas .bar-h{
	left:8px;
	right:10px;
	bottom:2px;
	height:3px;
	}
.canvas .bar-v{
	right:2px;
	top:11px;
	bottom:16px;
	width:3px;
	}
.canvas .flap{
	top:16px;
	}

/* outliner */
.outliner .search{
	width:124px;
	margin-left:10px;
	}
.outliner .header{
	padding-right:7px;
	}
.tree{
	flex:1;
	position:relative;
	margin-top:1px;
	background:repeating-linear-gradient(#282828 0 22px,#2b2b2b 22px 44px);
	color:#c8c8c8;
	}
.outliner{
	background:#282828;
	}
.tree:before{
	content:"";
	position:absolute;
	left:32px;
	top:49px;
	width:1px;
	height:100px;
	background:#666;
	}
.tree li{
	display:flex;
	align-items:center;
	height:22px;
	padding-right:11px;
	}
.tree .root{
	padding-left:26px;
	}
.tree .coll{
	padding-left:29px;
	}
.tree .ob{
	padding-left:52px;
	}
.tri{
	width:18px;
	font-size:9px;
	font-weight:normal;
	color:#bbb;
	}
.tree span{
	margin-left:7px;
	}
.tree span + .i{
	margin-left:25px;
	}
.tree span + .i + .i{
	margin-left:6px;
	}
.hot{
	background:#555;
	border-radius:4px;
	box-shadow:0 0 0 2px #555,0 0 0 3px #777;
	}
.hid span,.hid .tri,.hid > .i{
	opacity:.55;
	}
.flags{
	display:flex;
	align-items:center;
	gap:6px;
	margin-left:auto;
	color:#e6e6e6;
	}
.flags input{
	appearance:none;
	width:12px;
	height:12px;
	border-radius:2px;
	background:#e6e6e6 url("data:image/svg+xml,%3Csvg xmlns='http://www.w3.org/2000/svg' width='12' height='12'%3E%3Cpath d='M2.500 6l2.500 3 4.500-6' fill='none' stroke='%23222' stroke-width='2'/%3E%3C/svg%3E");
	}
.or{
	color:#c1814b;
	}
.gr{
	color:#00b386;
	}
.bl{
	color:#5b7fc7;
	}
.rd{
	color:#b25560;
	}

/* properties */
.props .header{
	padding:0 7px 1px 8px;
	}
.props .search{
	width:124px;
	margin-left:55px;
	}
.props-body{
	flex:1;
	min-height:0;
	display:flex;
	}
.ptabs{
	width:30px;
	padding:9px 0 0 2px;
	background:#1d1d1d;
	color:#aaa;
	}
.ptabs div{
	display:flex;
	flex-direction:column;
	gap:2px;
	padding-bottom:1px;
	margin-bottom:8px;
	border-bottom:1px solid #181818;
	}
.ptabs button{
	height:28px;
	border-radius:5px 0 0 5px;
	}
.ptabs .i{
	display:block;
	margin:0 auto;
	}
.ptabs .wh{
	color:#d0d0d0;
	}
.ptabs .active{
	background:#303030;
	color:#74a2ff;
	}
.panel{
	flex:1;
	padding:11px 7px 0 8px;
	}
.crumb{
	display:flex;
	align-items:center;
	padding:0 2px 0 3px;
	margin-bottom:19px;
	}
.crumb span{
	margin-left:10px;
	}
.crumb .plain{
	margin-left:auto;
	}
.panel .sel{
	width:100%;
	}

/* status bar */
.status{
	height:22px;
	flex:none;
	display:flex;
	align-items:center;
	padding:1px 9px 0 12px;
	background:#1d1d1d;
	color:#8c8c8c;
	}
.status span{
	display:flex;
	align-items:center;
	gap:13px;
	width:212px;
	}
.status svg{
	width:12px;
	height:16px;
	}
.player{
	display:flex;
	align-items:center;
	gap:10px;
	height:19px;
	margin-left:247px;
	padding:0 8px 0 5px;
	border-radius:4px;
	background:#4a4a4a;
	color:#e6e6e6;
	}
.status .player svg{
	width:16px;
	}
.status .ver{
	width:auto;
	margin-left:auto;
	}
```
FILE: grid.js
```js
// floor grid of the 3d view: origin and the two vanishing points in svg units
var O = [463, 277], VX = [139, -41], VY = [1954, -41];
var ex = -0.0444, ey = 0.02144;

function project(x, y) {
	var w = 1 + ex * x + ey * y;
	return [
		((O[0] + x * ex * VX[0] + y * ey * VY[0]) / w).toFixed(1),
		((O[1] + x * ex * VX[1] + y * ey * VY[1]) / w).toFixed(1)
	].join(' ');
}
// line along X at the given y, cut just before it reaches the camera
function alongX(y) {
	return 'M' + project(-160, y) + 'L' + project((0.93 + ey * y) / -ex, y);
}
function alongY(x) {
	return 'M' + project(x, (-0.93 - ex * x) / ey) + 'L' + project(x, 400);
}

var minor = '', major = '';
for (var i = -70; i <= 160; i++) {
	if (i == 0) continue;
	var near = i > -42, s = near ? alongX(i) : '';
	if (i % 10 == 0) major += s; else minor += s;
	var j = -i, t = j < 22 ? alongY(j) : '';
	if (j % 10 == 0) major += t; else if (j > -60) minor += t;
}
document.getElementById('minor').setAttribute('d', minor);
document.getElementById('major').setAttribute('d', major);
document.getElementById('axis-x').setAttribute('d', alongX(0));
document.getElementById('axis-y').setAttribute('d', alongY(0));

// dot grid of the node editor
function dots() {
	var box = document.getElementById('canvas'), step = 19.45, small = '', large = '';
	for (var r = 0; r * step + 9 < box.clientHeight; r++) {
		for (var c = 0; c * step + 13 < box.clientWidth; c++) {
			var x = Math.round(c * step + 13), y = Math.round(r * step + 9);
			if (c % 5 == 0 && r % 5 == 1) large += 'M' + x + ' ' + y + 'h3v4h-3z';
			else small += 'M' + x + ' ' + y + 'h2v2h-2z';
		}
	}
	document.getElementById('dots-s').setAttribute('d', small);
	document.getElementById('dots-l').setAttribute('d', large);
}
dots();
window.onresize = dots;
```
